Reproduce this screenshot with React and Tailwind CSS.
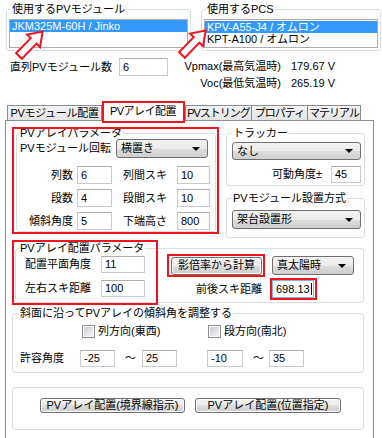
import React from 'react';

const grad = 'bg-[linear-gradient(#f2f2f2,#ebebeb_50%,#dddddd_50%,#cfcfcf)]';

function TextBox({ value, className = '', focused = false }) {
    return (
        <div
            className={`flex items-center border bg-white pl-[3px] leading-none ${
                focused ? 'border-[#7eb4ea]' : 'border-[#c8cbd1] border-t-[#abadb3]'
            } ${className}`}
        >
            {value}
            {focused && <span className="ml-px inline-block h-[12px] w-px bg-black" />}
        </div>
    );
}

function Combo({ value, className = '' }) {
    return (
        <div
            className={`flex items-center justify-between rounded-[3px] border border-[#707070] ${grad} pl-[4px] pr-[7px] leading-none ${className}`}
        >
            <span>{value}</span>
            <svg width="8" height="4" viewBox="0 0 8 4">
                <path d="M0 0h8L4 4z" fill="#000" />
            </svg>
        </div>
    );
}

function Btn({ children, className = '' }) {
    return (
        <div
            className={`flex items-center justify-center rounded-[3px] border border-[#707070] ${grad} shadow-[inset_0_0_0_1px_#fbfbfb] leading-none ${className}`}
        >
            {children}
        </div>
    );
}

function Check({ label, className = '' }) {
    return (
        <div className={`flex items-center ${className}`}>
            <div className="flex h-[13px] w-[13px] items-center justify-center border border-[#8e8f8f] bg-white">
                <div className="h-[9px] w-[9px] bg-[linear-gradient(135deg,#c9cdd3,#f4f4f4)]" />
            </div>
            <span className="ml-[3px]">{label}</span>
        </div>
    );
}

function Tab({ children, className = '' }) {
    return (
        <div
            className={`h-[15px] overflow-hidden border border-b-0 border-[#898c95] bg-[linear-gradient(#f3f3f3,#e4e4e4)] text-center leading-[14px] ${className}`}
        >
            {children}
        </div>
    );
}

function ParamRow({ l1, v1, l2, v2, className = '' }) {
    return (
        <div className={`flex h-[18px] items-center ${className}`}>
            <div className="w-[53px] text-right">{l1}</div>
            <TextBox value={v1} className="ml-[4px] h-[18px] w-[35px]" />
            <div className="ml-[11px] w-[50px]">{l2}</div>
            <TextBox value={v2} className="ml-[4px] h-[18px] w-[33px]" />
        </div>
    );
}

const red = 'pointer-events-none absolute border-2 border-[#f0141e]';
const frame = 'rounded-[3px] border border-[#d5dfe5]';

export default function App() {
    return (
        <div className="relative h-[438px] w-[382px] overflow-hidden whitespace-nowrap bg-white text-[11px] text-black font-['Liberation_Sans','Noto_Sans_CJK_JP',sans-serif]">
            {/* 使用するPVモジュール / PCS */}
            <div className="flex">
                <fieldset className={`ml-[6px] mt-[3px] w-[185px] ${frame}`}>
                    <legend className="ml-[4px] px-px leading-[13px]">使用するPVモジュール</legend>
                    <div className="px-[2px] pb-[2px] pt-[3px]">
                        <div className="h-[29px] border border-[#abadb3] bg-white">
                            <div className="h-[12px] bg-[#3399ff] pl-[2px] leading-[12px] text-white">JKM325M-60H / Jinko</div>
                        </div>
                    </div>
                </fieldset>
                <fieldset className={`ml-[10px] mt-[3px] w-[180px] ${frame}`}>
                    <legend className="ml-[4px] px-px leading-[13px]">使用するPCS</legend>
                    <div className="px-[2px] pb-[2px] pt-[3px]">
                        <div className="h-[29px] border border-[#abadb3] bg-white pt-px">
                            <div className="h-[12px] bg-[#3399ff] pl-[2px] leading-[12px] text-white">KPV-A55-J4 / オムロン</div>
                            <div className="h-[13px] pl-[2px] leading-[13px]">KPT-A100 / オムロン</div>
                        </div>
                    </div>
                </fieldset>
            </div>

            {/* 直列数 / 電圧 */}
            <div className="mt-[7px] flex items-start">
                <div className="ml-[10px] w-[109px] leading-[18px]">直列PVモジュール数</div>
                <TextBox value="6" className="h-[18px] w-[49px]" />
                <div className="grid grid-cols-[113px_auto] gap-x-[10px] leading-[17px]">
                    <div className="text-right">Vpmax(最高気温時)</div>
                    <div>179.67 V</div>
                    <div className="text-right">Voc(最低気温時)</div>
                    <div>265.19 V</div>
                </div>
            </div>

            {/* タブ */}
            <div className="mt-[9px] flex h-[19px] items-end">
                <Tab className="ml-[7px] w-[95px] tracking-[-0.3px]">PVモジュール配置</Tab>
                <div className="relative z-10 -mb-px h-[20px] w-[82px] border border-b-0 border-[#898c95] bg-white text-center leading-[19px] tracking-[-0.5px]">
                    PVアレイ配置
                    <div className={`${red} -bottom-[2px] -left-px -right-[2px] -top-px`} />
                </div>
                <Tab className="ml-px w-[67px] tracking-[-1px]">PVストリング</Tab>
                <Tab className="-ml-px w-[57px] tracking-[-1px]">プロパティ</Tab>
                <Tab className="-ml-px w-[54px] tracking-[-1px]">マテリアル</Tab>
            </div>

            <div className="ml-[5px] h-[330px] w-[369px] border border-b-0 border-[#898c95] bg-white pl-[6px] pt-[6px]">
                {/* PVアレイパラメータ / トラッカー */}
                <div className="flex items-start">
                    <div className="relative w-[207px] pb-[2px]">
                        <fieldset className={`ml-[4px] w-[200px] ${frame}`}>
                            <legend className="ml-[2px] px-px leading-[12px]">PVアレイパラメータ</legend>
                            <div className="pb-px pl-[3px]">
                                <div className="flex items-center">
                                    <div className="w-[96px]">PVモジュール回転</div>
                                    <Combo value="横置き" className="h-[19px] w-[92px]" />
                                </div>
                                <ParamRow className="mt-[8px]" l1="列数" v1="6" l2="列間スキ" v2="10" />
                                <ParamRow className="mt-[5px]" l1="段数" v1="4" l2="段間スキ" v2="10" />
                                <ParamRow className="mt-[5px]" l1="傾斜角度" v1="5" l2="下端高さ" v2="800" />
                            </div>
                        </fieldset>
                        <div className={`${red} inset-0`} />
                    </div>

                    <div className="ml-[7px] flex w-[139px] flex-col">
                        <fieldset className={`w-full ${frame}`}>
                            <legend className="ml-[5px] px-px leading-[12px]">トラッカー</legend>
                            <div className="pb-[2px] pl-[5px] pr-[3px]">
                                <Combo value="なし" className="mt-[3px] h-[18px] w-[129px]" />
                                <div className="mt-[6px] flex items-center justify-end">
                                    <span>可動角度±</span>
                                    <TextBox value="45" className="ml-[9px] h-[17px] w-[30px]" />
                                </div>
                            </div>
                        </fieldset>
                        <fieldset className={`mt-[6px] w-full ${frame}`}>
                            <legend className="ml-[5px] px-px leading-[12px]">PVモジュール設置方式</legend>
                            <div className="pb-[8px] pl-[5px]">
                                <Combo value="架台設置形" className="mt-[6px] h-[19px] w-[129px]" />
                            </div>
                        </fieldset>
                    </div>
                </div>

                {/* PVアレイ配置パラメータ */}
                <div className="relative ml-[3px] mt-[4px] w-[349px]">
                    <fieldset className={`w-full ${frame}`}>
                        <legend className="ml-[3px] px-px leading-[12px]">PVアレイ配置パラメータ</legend>
                        <div className="mt-[2px] flex items-start pb-[4px] pl-[4px]">
                            <div className="grid grid-cols-[71px_44px] gap-x-[10px] gap-y-[7px]">
                                <div className="text-right leading-[17px]">配置平面角度</div>
                                <TextBox value="11" className="h-[17px]" />
                                <div className="text-right leading-[17px]">左右スキ距離</div>
                                <TextBox value="100" className="h-[17px]" />
                            </div>
                            <div className="ml-[26px] grid grid-cols-[91px_82px] items-center gap-x-[10px] gap-y-[5px]">
                                <div className="relative">
                                    <Btn className="h-[18px] w-full">影倍率から計算</Btn>
                                    <div className={`${red} -bottom-[2px] -left-[4px] -right-[3px] -top-[3px]`} />
                                </div>
                                <Combo value="真太陽時" className="h-[19px] w-full" />
                                <div className="text-right leading-[18px]">前後スキ距離</div>
                                <div className="relative w-[42px]">
                                    <TextBox value="698.13" focused className="h-[18px] w-full" />
                                    <div className={`${red} -bottom-[2px] -left-[2px] -right-[3px] -top-[2px]`} />
                                </div>
                            </div>
                        </div>
                    </fieldset>
                    <div className={`${red} -left-[3px] -top-[2px] h-[65px] w-[146px]`} />
                </div>

                {/* 斜面 */}
                <fieldset className={`mt-[4px] w-[352px] ${frame}`}>
                    <legend className="ml-[6px] px-px leading-[12px]">斜面に沿ってPVアレイの傾斜角を調整する</legend>
                    <div className="pb-[5px]">
                        <div className="mt-[6px] flex h-[13px] items-center pl-[69px]">
                            <Check label="列方向(東西)" className="w-[126px]" />
                            <Check label="段方向(南北)" />
                        </div>
                        <div className="mt-[12px] flex h-[17px] items-center pl-[7px]">
                            <div className="w-[60px]">許容角度</div>
                            <TextBox value="-25" className="h-[17px] w-[35px]" />
                            <div className="ml-[10px] w-[17px]">～</div>
                            <TextBox value="25" className="h-[17px] w-[35px]" />
                            <TextBox value="-10" className="ml-[30px] h-[17px] w-[36px]" />
                            <div className="ml-[10px] w-[16px]">～</div>
                            <TextBox value="35" className="h-[17px] w-[35px]" />
                        </div>
                    </div>
                </fieldset>

                {/* 配置ボタン */}
                <div className={`mt-[14px] flex w-[352px] pb-[16px] pl-[27px] pt-[10px] ${frame}`}>
                    <Btn className="h-[15px] w-[145px]">PVアレイ配置(境界線指示)</Btn>
                    <Btn className="ml-[10px] h-[15px] w-[146px]">PVアレイ配置(位置指定)</Btn>
                </div>
            </div>

            {/* 矢印 */}
            <svg className="pointer-events-none absolute left-0 top-0" width="382" height="438">
                <polygon
                    points="0,-4 21,-4 21,-9 34,0 21,9 21,4 0,4"
                    transform="translate(19 56) rotate(-46)"
                    fill="#fff"
                    stroke="#f0141e"
                    strokeWidth="2"
                />
                <polygon
                    points="0,-4 21,-4 21,-9 34,0 21,9 21,4 0,4"
                    transform="translate(182 55) rotate(-46)"
                    fill="#fff"
                    stroke="#f0141e"
                    strokeWidth="2"
                />
            </svg>
        </div>
    );
}
